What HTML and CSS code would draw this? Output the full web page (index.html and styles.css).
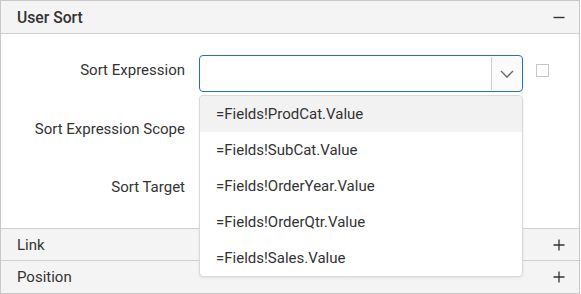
FILE: index.html
```html
<!DOCTYPE html>
<html>
<head>
<meta charset="utf-8">
<link rel="stylesheet" href="styles.css">
</head>
<body>
<div class="panel">
  <div class="section-head open">
    <span class="title">User Sort</span>
    <svg class="toggle" width="12" height="12" viewBox="0 0 12 12"><path d="M0.5 6.5H11.5" stroke="#333" stroke-width="1.4"/></svg>
  </div>
  <div class="section-body">
    <div class="row">
      <label class="lbl">Sort Expression</label>
      <div class="combo focused">
        <div class="combo-input"></div>
        <div class="combo-btn">
          <svg width="14" height="8" viewBox="0 0 14 8"><path d="M1 1L7 7L13 1" fill="none" stroke="#666" stroke-width="1.3"/></svg>
        </div>
        <ul class="popup">
          <li class="item active">=Fields!ProdCat.Value</li>
          <li class="item">=Fields!SubCat.Value</li>
          <li class="item">=Fields!OrderYear.Value</li>
          <li class="item">=Fields!OrderQtr.Value</li>
          <li class="item">=Fields!Sales.Value</li>
        </ul>
      </div>
      <span class="check"></span>
    </div>
    <div class="row">
      <label class="lbl">Sort Expression Scope</label>
      <div class="combo"></div>
    </div>
    <div class="row">
      <label class="lbl">Sort Target</label>
      <div class="combo"></div>
    </div>
  </div>
  <div class="section-head closed">
    <span class="name">Link</span>
    <svg class="toggle" width="12" height="12" viewBox="0 0 12 12"><path d="M0.5 6H11.5M6 0.5V11.5" stroke="#333" stroke-width="1.3"/></svg>
  </div>
  <div class="section-head closed last">
    <span class="name">Position</span>
    <svg class="toggle" width="12" height="12" viewBox="0 0 12 12"><path d="M0.5 6H11.5M6 0.5V11.5" stroke="#333" stroke-width="1.3"/></svg>
  </div>
</div>
</body>
</html>
```
FILE: styles.css
```css
* { box-sizing: border-box; }
html, body { margin: 0; padding: 0; }
body {
  font-family: Roboto, "Liberation Sans", sans-serif;
  color: #333;
  background: #fff;
  width: 581px;
  height: 294px;
  overflow: hidden;
}
.panel {
  width: 580px;
  height: 294px;
  border: 1px solid #c8c8c8;
  display: flex;
  flex-direction: column;
}
.section-head {
  background: #f4f4f4;
  display: flex;
  align-items: center;
  justify-content: space-between;
  padding: 0 14px 0 16px;
}
.section-head.open {
  height: 33px;
  border-bottom: 1px solid #cfcfcf;
}
.section-head.closed {
  height: 32px;
  border-top: 1px solid #cfcfcf;
}
.section-head.last { height: 33px; }
.title {
  font-size: 15.7px;
  font-weight: 500;
  color: #333;
}
.name {
  font-size: 15px;
  color: #333;
}
.toggle { display: block; }
.section-body {
  height: 194px;
  padding-top: 21px;
  display: flex;
  flex-direction: column;
  gap: 21.5px;
}
.row {
  display: grid;
  grid-template-columns: 184px 324px 13px;
  column-gap: 14px;
  height: 37px;
  align-items: start;
}
.lbl {
  font-size: 15px;
  line-height: 20px;
  padding-top: 5px;
  text-align: right;
  color: #333;
  white-space: nowrap;
}
.combo {
  position: relative;
  height: 37px;
  display: flex;
}
.combo.focused {
  border: 1px solid #1a6fe8;
  border-radius: 4px;
}
.combo-input { flex: 1; }
.combo-btn {
  width: 31px;
  margin: 1px 0;
  border-left: 1px solid #cdcdcd;
  background: #fbfbfb;
  border-radius: 0 3px 3px 0;
  display: flex;
  align-items: center;
  justify-content: center;
}
.check {
  width: 13px;
  height: 13px;
  margin-top: 9px;
  margin-left: -1px;
  border: 1px solid #c6c6c6;
  background: #fff;
}
.popup {
  position: absolute;
  left: -1px;
  right: -1px;
  top: calc(100% + 4px);
  margin: 0;
  padding: 0;
  list-style: none;
  background: #fff;
  border: 1px solid #d9d9d9;
  border-radius: 4px;
  box-shadow: 0 1px 3px rgba(0,0,0,0.08);
  overflow: hidden;
  z-index: 5;
}
.item {
  height: 36px;
  line-height: 36px;
  padding-left: 16px;
  font-size: 15px;
  color: #333;
}
.item.active { background: #f2f2f2; }
```
